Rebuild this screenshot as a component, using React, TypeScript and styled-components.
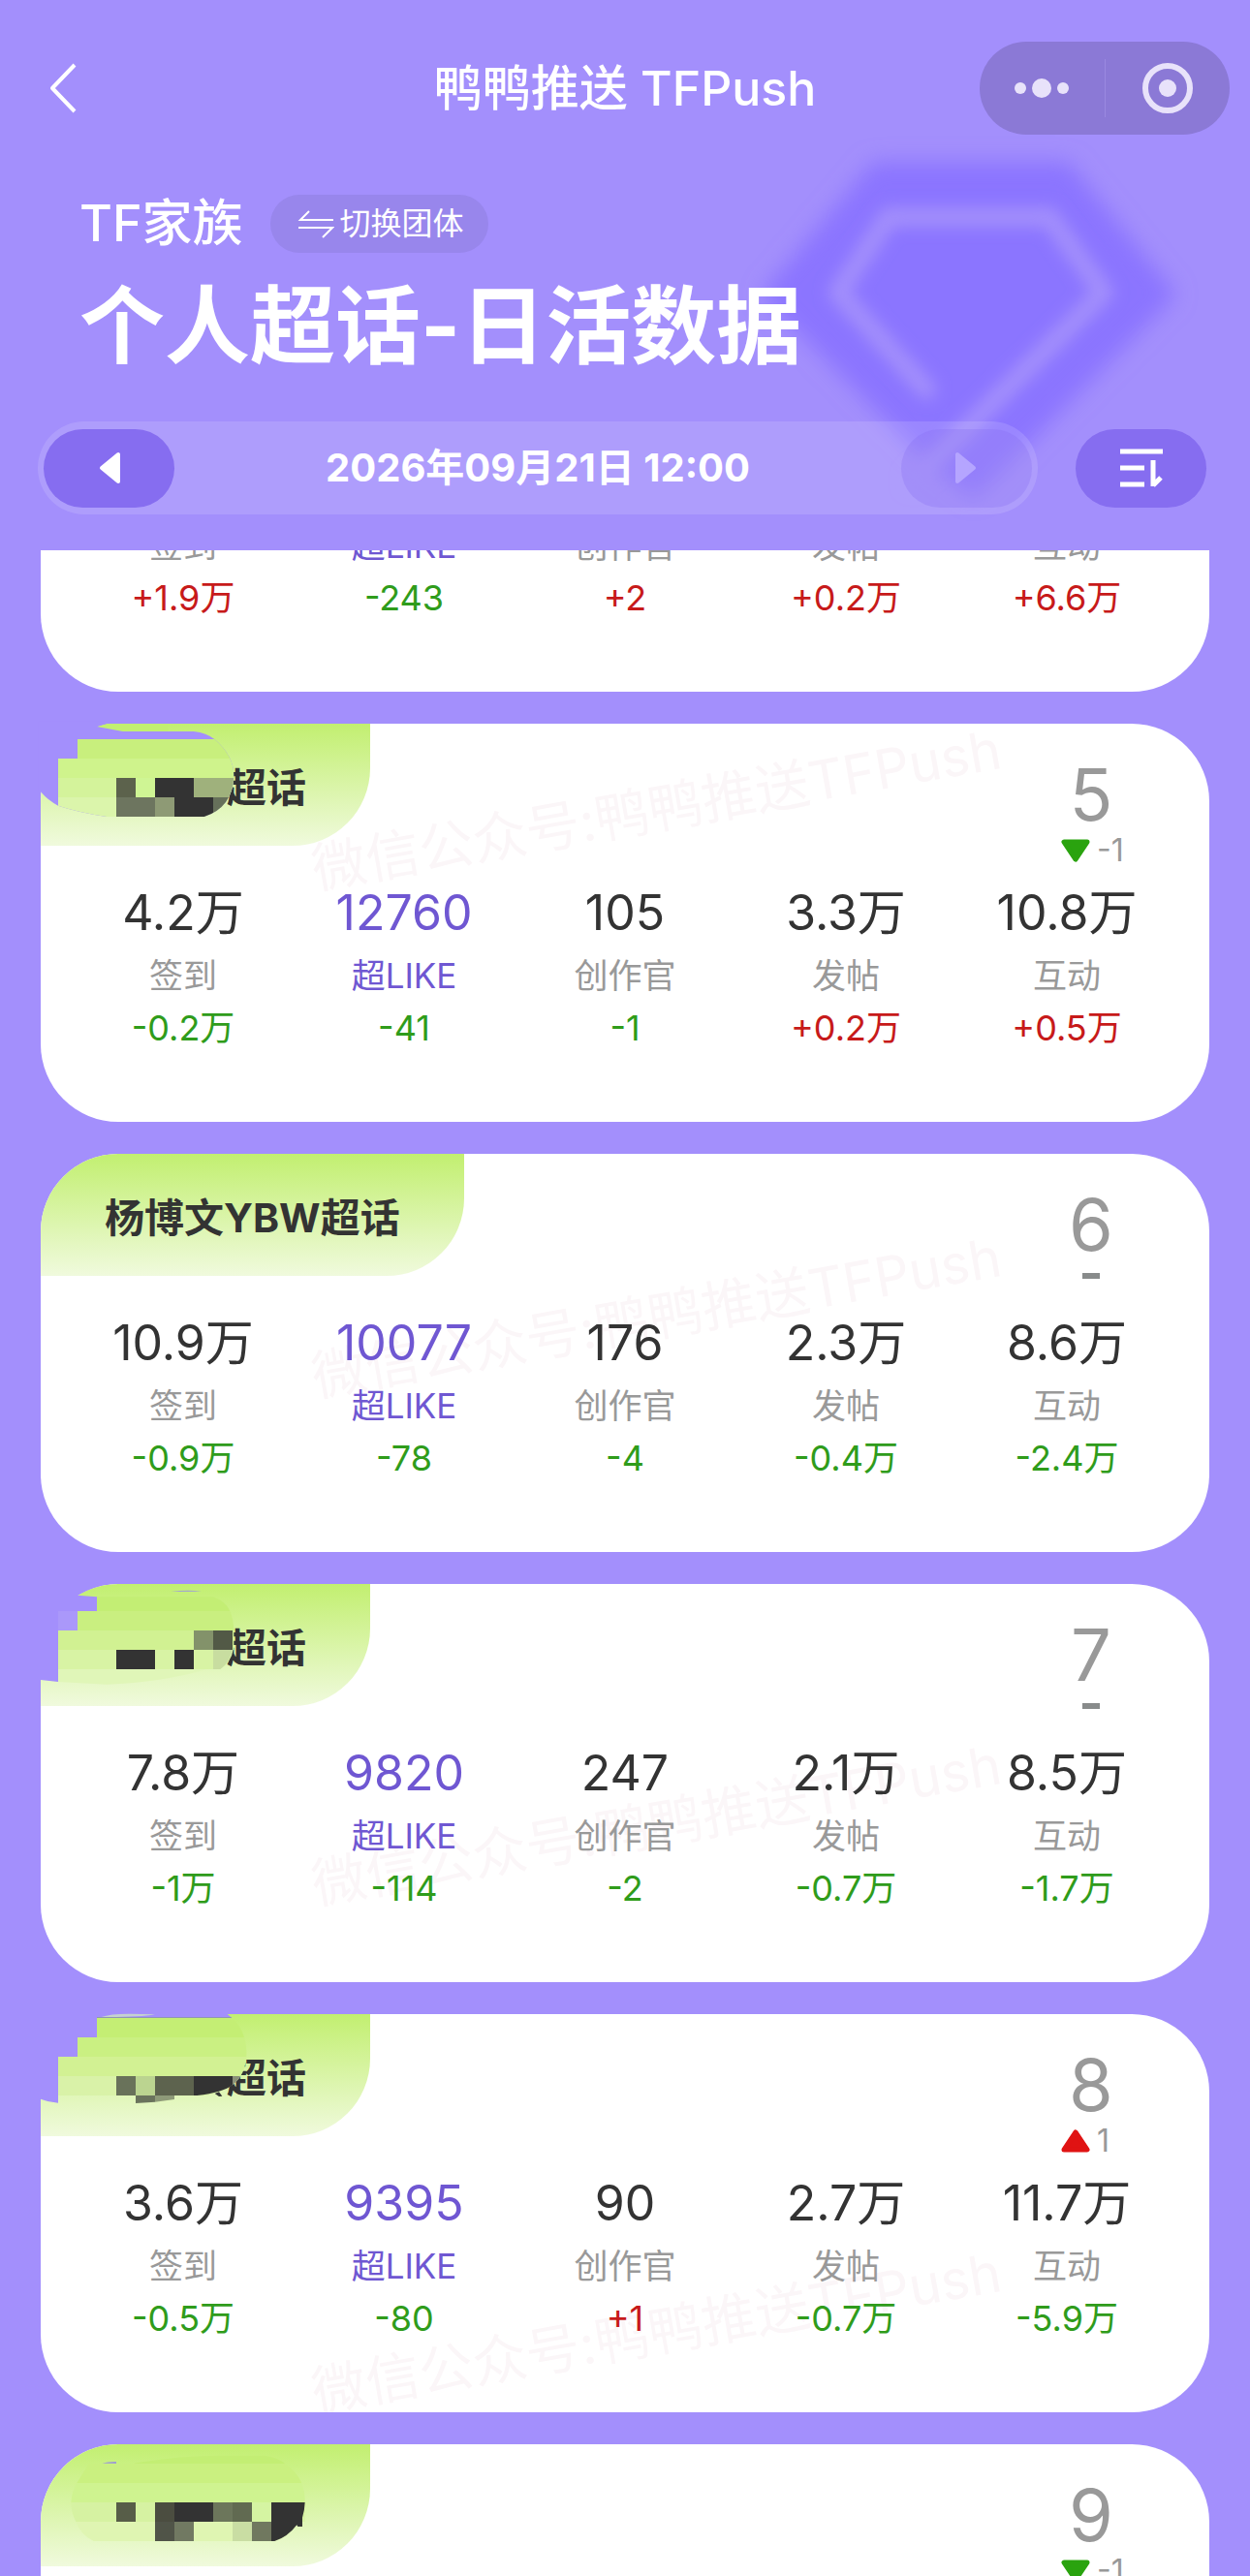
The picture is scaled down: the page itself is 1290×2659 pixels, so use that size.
import React, { Fragment, ReactNode } from "react";
import styled, { createGlobalStyle } from "styled-components";

const GlobalStyle = createGlobalStyle`
  *, *::before, *::after { box-sizing: border-box; }
  body {
    margin: 0;
    background: #a38ffc;
    font-family: Inter, "Noto Sans CJK SC", sans-serif;
    color: #333;
  }
  button { font: inherit; color: inherit; border: 0; padding: 0; background: none; cursor: pointer; }
  h1, h2, p, ul, dl, dd, dt { margin: 0; padding: 0; font-weight: inherit; }
  svg { display: block; flex: none; }
`;

const Page = styled.div`
  position: relative;
  display: flex;
  flex-direction: column;
  height: 100vh;
  overflow: hidden;
  background: #a38ffc;
`;

const GemArt = styled.svg`
  position: absolute;
  top: 122px;
  right: 47px;
`;

const NavBar = styled.header`
  position: relative;
  display: grid;
  grid-template-columns: 258px 1fr 258px;
  align-items: center;
  padding: 43px 21px 0;
  color: #fff;
`;

const BackButton = styled.button`
  display: flex;
  align-items: center;
  height: 96px;
  padding-left: 28px;
`;

const NavTitle = styled.h1`
  font-size: 50px;
  line-height: 72px;
  font-weight: 500;
  text-align: center;
  white-space: nowrap;
`;

const Capsule = styled.div`
  display: flex;
  align-items: center;
  height: 96px;
  border-radius: 48px;
  background: #8b79d6;
  color: #e8e2fa;
`;

const CapsuleButton = styled.button`
  flex: 1;
  display: flex;
  align-items: center;
  justify-content: center;
  height: 96px;
`;

const CapsuleDivider = styled.span`
  width: 1px;
  height: 60px;
  background: #9a89e0;
`;

const Hero = styled.section`
  position: relative;
  padding: 62px 82px 0;
  color: #fff;
`;

const GroupRow = styled.div`
  display: flex;
  align-items: center;
  gap: 28px;
`;

const GroupName = styled.p`
  font-size: 52px;
  line-height: 60px;
  font-weight: 500;
`;

const SwitchButton = styled.button`
  display: flex;
  align-items: center;
  gap: 6px;
  height: 60px;
  padding: 0 25px 0 28px;
  border-radius: 30px;
  background: #9886ec;
  font-size: 32px;
  line-height: 48px;
`;

const PageTitle = styled.h2`
  margin-top: 23px;
  font-size: 88px;
  line-height: 104px;
  font-weight: 700;
  white-space: nowrap;
`;

const Toolbar = styled.div`
  position: relative;
  display: flex;
  align-items: center;
  gap: 39px;
  margin: 47px 45px 37px 39px;
  color: #fff;
`;

const DateBar = styled.div`
  flex: 1;
  display: flex;
  align-items: center;
  justify-content: space-between;
  height: 96px;
  padding: 0 6px;
  border-radius: 48px;
  background: rgba(255, 255, 255, 0.13);
`;

const DateText = styled.time`
  font-size: 40px;
  line-height: 54px;
  font-weight: 700;
  white-space: nowrap;
`;

const PillButton = styled.button<{ $muted?: boolean }>`
  display: flex;
  align-items: center;
  justify-content: center;
  width: 135px;
  height: 81px;
  border-radius: 41px;
  background: ${(p) => (p.$muted ? "rgba(133, 109, 240, 0.28)" : "#866df0")};
  color: ${(p) => (p.$muted ? "#b5a5ff" : "#fff")};
`;

const List = styled.main`
  position: relative;
  flex: 1;
  min-height: 0;
  overflow: hidden;
  display: flex;
  flex-direction: column;
  gap: 33px;
  padding: 0 42px;
`;

const Card = styled.article<{ $clipped?: boolean }>`
  position: relative;
  flex: none;
  overflow: ${(p) => (p.$clipped ? "hidden" : "visible")};
  padding-bottom: 70px;
  border-radius: ${(p) => (p.$clipped ? "0 0 80px 80px" : "80px")};
  background: #fff;
`;

const CardHead = styled.div`
  position: relative;
  display: flex;
  justify-content: space-between;
  align-items: flex-start;
  height: 157px;
  padding-right: 90px;
`;

const NameTab = styled.div`
  position: relative;
  display: flex;
  align-items: center;
  justify-content: flex-end;
  min-width: 340px;
  height: 126px;
  padding: 6px 66px 0;
  border-radius: 80px 0 80px 0;
  background: linear-gradient(#c2ef70, #f0fadd);
  font-size: 41px;
  line-height: 60px;
  font-weight: 700;
`;

const Mosaic = styled.svg`
  position: absolute;
  top: 0;
  left: 0;
  overflow: visible;
`;

const RankBox = styled.div`
  display: flex;
  flex-direction: column;
  width: 64px;
  padding-top: 34px;
  color: #999;
`;

const RankNumber = styled.p`
  font-size: 74px;
  line-height: 78px;
  text-align: center;
`;

const Trend = styled.p<{ $flat?: boolean }>`
  display: flex;
  align-items: center;
  justify-content: ${(p) => (p.$flat ? "center" : "flex-start")};
  gap: 6px;
  font-size: 32px;
  line-height: 38px;
  white-space: nowrap;
  height: 38px;
`;

const FlatMark = styled.span`
  width: 18px;
  height: 6px;
  margin-top: -10px;
  background: #888b8b;
`;

const Stats = styled.dl`
  position: relative;
  display: grid;
  grid-template-columns: repeat(5, 1fr);
  padding: 0 33px;
  text-align: center;
`;

const Stat = styled.div<{ $clipped?: boolean }>`
  display: flex;
  flex-direction: column;
  margin-top: ${(p) => (p.$clipped ? "-32px" : "0")};
`;

const Value = styled.dd<{ $accent?: boolean }>`
  order: -1;
  font-size: 50px;
  line-height: 76px;
  color: ${(p) => (p.$accent ? "#6f57d2" : "#333")};
`;

const Label = styled.dt<{ $accent?: boolean }>`
  font-size: 35px;
  line-height: 54px;
  color: ${(p) => (p.$accent ? "#6f57d2" : "#999")};
`;

const Delta = styled.dd<{ $up: boolean }>`
  font-size: 36px;
  line-height: 54px;
  color: ${(p) => (p.$up ? "#c71a1a" : "#2f9c1b")};
`;

const WatermarkLayer = styled.div`
  position: absolute;
  inset: 0;
  overflow: hidden;
  border-radius: 80px;
  pointer-events: none;
`;

const Watermark = styled.div<{ $center: number }>`
  position: absolute;
  top: ${(p) => p.$center - 40}px;
  left: 0;
  right: 0;
  padding-left: 66px;
  font-size: 56px;
  line-height: 80px;
  text-align: center;
  white-space: nowrap;
  color: #fbf6f8;
  transform: rotate(-10deg);
`;

const LABELS = ["签到", "超LIKE", "创作官", "发帖", "互动"];
const PURPLE = "#a38ffc";

type Block = [number, number, number, number, string];

function Blocks({ items }: { items: Block[] }) {
  return (
    <>
      {items.map(([x, y, w, h, fill], i) => (
        <rect key={i} x={x} y={y} width={w} height={h} fill={fill} />
      ))}
    </>
  );
}

interface Topic {
  rank: number;
  name: string;
  change: number;
  values: string[];
  deltas: string[];
  watermark?: number;
  cover?: ReactNode;
}

const coverFive = (
  <Mosaic width="340" height="126" viewBox="126 51 1020 378">
    <defs>
      <clipPath id="brush5">
        <path d="M118 43H330V51L300 60L380 75H600Q640 80 664 99Q725 150 724 215Q720 310 632 339H330Q240 325 180 305Q150 290 126 262H118Z" />
      </clipPath>
    </defs>
    <path d="M330 51L300 60L380 75H520V51Z" fill="#c2ef70" />
    <g clipPath="url(#brush5)">
      <rect x="116" y="41" width="640" height="310" fill={PURPLE} />
      <Blocks
        items={[
          [240, 99, 500, 60, "#c8ef7d"],
          [180, 159, 560, 60, "#cff38c"],
          [180, 219, 560, 60, "#d4f39b"],
          [180, 279, 560, 60, "#dbf5ab"],
          [360, 219, 60, 60, "#5c624c"],
          [420, 219, 60, 60, "#cff594"],
          [480, 219, 120, 60, "#333"],
          [600, 219, 130, 60, "#9fb17c"],
          [360, 279, 120, 60, "#6d755f"],
          [480, 279, 60, 60, "#8e9a75"],
          [540, 279, 120, 60, "#333"],
          [660, 279, 70, 60, "#66705a"],
        ]}
      />
    </g>
  </Mosaic>
);

const coverSeven = (
  <Mosaic width="340" height="126" viewBox="126 45 1020 378">
    <path d="M118 38H340V45Q290 52 240 80L300 85V129H240V189H180V348L126 342H118Z" fill={PURPLE} />
    <rect x="180" y="129" width="60" height="60" fill="#aa98fa" />
    <path d="M530 69Q580 62 624 68Z" fill="#9f9fd8" />
    <path d="M300 85H660Q700 100 712 129H300Z" fill="#c3ee74" />
    <path d="M240 129H712Q722 150 724 189H240Z" fill="#c9ef80" />
    <path d="M180 189H724V249H180Z" fill="#d1f192" />
    <path d="M180 249H722Q715 290 680 309H180Z" fill="#d8f3a4" />
    <path d="M180 309H640Q500 350 330 356L180 348Z" fill="#e0f6b8" />
    <Blocks
      items={[
        [360, 249, 120, 60, "#333"],
        [540, 249, 60, 60, "#333"],
        [600, 189, 60, 60, "#83926a"],
        [660, 189, 60, 60, "#525946"],
      ]}
    />
    <path d="M660 249H720Q710 290 682 309H660Z" fill="#c8dda0" />
  </Mosaic>
);

const coverEight = (
  <Mosaic width="340" height="126" viewBox="126 57 1020 378">
    <path d="M118 50H704V57L718 69H300V129H240V189H180V332Q150 330 126 320H118Z" fill={PURPLE} />
    <path d="M314 66Q340 56 400 56L480 58Q430 67 314 66Z" fill="#c5d2cf" />
    <path d="M300 66H716V70H300Z" fill="#8f96b4" />
    <path d="M300 69H716Q745 90 756 129H300Z" fill="#c4ee74" />
    <path d="M240 129H756Q765 160 763 189H240Z" fill="#caf082" />
    <path d="M180 189H763Q760 225 745 249H180Z" fill="#d2f193" />
    <path d="M180 249H745Q720 290 640 309H180Z" fill="#d9f2a8" />
    <Blocks
      items={[
        [360, 249, 60, 60, "#69725a"],
        [420, 249, 60, 60, "#bbd490"],
        [480, 249, 120, 60, "#5d634e"],
      ]}
    />
    <path d="M600 249H720V276Q690 300 610 309H600Z" fill="#333" />
    <path d="M720 249H744Q735 265 720 277Z" fill="#8a9178" />
    <path d="M665 303L678 298L688 311L678 312Z" fill="#333" />
    <path d="M420 309H480V329L420 333Z" fill="#6a735c" />
    <path d="M480 309H540V321L480 329Z" fill="#8e9a78" />
  </Mosaic>
);

const coverNine = (
  <Mosaic width="340" height="126" viewBox="126 69 1020 378">
    <path d="M415 128Q560 104 680 104H820Q860 110 882 129H415Z" fill="#c3ee74" />
    <path d="M316 128Q335 122 360 123V129Z" fill="#9f9fcf" />
    <path d="M275 129H882Q920 155 934 189H238Z" fill="#caf080" />
    <path d="M238 189H934Q946 220 944 249H220Q222 215 238 189Z" fill="#cff390" />
    <path d="M220 249H944V309H235Q220 280 220 249Z" fill="#d6f2a2" />
    <path d="M235 309H925Q890 360 850 369H290Q250 350 235 309Z" fill="#dff5b2" />
    <Blocks
      items={[
        [360, 249, 60, 60, "#575d48"],
        [480, 249, 60, 60, "#4b4d40"],
        [540, 249, 120, 60, "#333"],
        [660, 249, 60, 60, "#6c765b"],
        [720, 249, 60, 60, "#616a51"],
        [780, 249, 60, 60, "#d5f4a2"],
        [480, 309, 60, 60, "#505448"],
        [540, 309, 60, 60, "#717962"],
        [720, 309, 60, 60, "#c9dda3"],
        [780, 309, 60, 60, "#70785f"],
      ]}
    />
    <path d="M840 249H944Q943 275 936 296V324H922L919 319Q890 357 850 369H840Z" fill="#333" />
  </Mosaic>
);

const TOPICS: Topic[] = [
  {
    rank: 5,
    name: "超话",
    change: -1,
    values: ["4.2万", "12760", "105", "3.3万", "10.8万"],
    deltas: ["-0.2万", "-41", "-1", "+0.2万", "+0.5万"],
    watermark: 94,
    cover: coverFive,
  },
  {
    rank: 6,
    name: "杨博文YBW超话",
    change: 0,
    values: ["10.9万", "10077", "176", "2.3万", "8.6万"],
    deltas: ["-0.9万", "-78", "-4", "-0.4万", "-2.4万"],
    watermark: 174,
  },
  {
    rank: 7,
    name: "超话",
    change: 0,
    values: ["7.8万", "9820", "247", "2.1万", "8.5万"],
    deltas: ["-1万", "-114", "-2", "-0.7万", "-1.7万"],
    watermark: 254,
    cover: coverSeven,
  },
  {
    rank: 8,
    name: "超话",
    change: 1,
    values: ["3.6万", "9395", "90", "2.7万", "11.7万"],
    deltas: ["-0.5万", "-80", "+1", "-0.7万", "-5.9万"],
    watermark: 334,
    cover: coverEight,
  },
  {
    rank: 9,
    name: "",
    change: -1,
    values: [],
    deltas: [],
    cover: coverNine,
  },
];

function TrendMark({ change }: { change: number }) {
  if (change === 0) {
    return (
      <Trend $flat>
        <FlatMark role="img" aria-label="持平" />
      </Trend>
    );
  }
  const up = change > 0;
  return (
    <Trend>
      <svg width="32" height="26" viewBox="0 0 32 26" aria-hidden="true">
        <path
          d={up ? "M16 4L28 22H4Z" : "M4 4H28L16 22Z"}
          fill={up ? "#e01313" : "#2aa30f"}
          stroke={up ? "#e01313" : "#2aa30f"}
          strokeWidth="5"
          strokeLinejoin="round"
        />
      </svg>
      {change}
    </Trend>
  );
}

function TopicCard({ topic }: { topic: Topic }) {
  return (
    <Card>
      {topic.watermark !== undefined && (
        <WatermarkLayer aria-hidden="true">
          <Watermark $center={topic.watermark}>微信公众号:鸭鸭推送TFPush</Watermark>
        </WatermarkLayer>
      )}
      <CardHead>
        <NameTab>
          {topic.name}
          {topic.cover}
        </NameTab>
        <RankBox>
          <RankNumber>{topic.rank}</RankNumber>
          <TrendMark change={topic.change} />
        </RankBox>
      </CardHead>
      {topic.values.length > 0 && (
        <Stats>
          {LABELS.map((label, i) => (
            <Stat key={label}>
              <Label $accent={i === 1}>{label}</Label>
              <Value $accent={i === 1}>{topic.values[i]}</Value>
              <Delta $up={topic.deltas[i].startsWith("+")}>{topic.deltas[i]}</Delta>
            </Stat>
          ))}
        </Stats>
      )}
    </Card>
  );
}

function ScrolledCard({ deltas }: { deltas: string[] }) {
  return (
    <Card $clipped>
      <Stats>
        {LABELS.map((label, i) => (
          <Stat key={label} $clipped>
            <Label $accent={i === 1}>{label}</Label>
            <Delta $up={deltas[i].startsWith("+")}>{deltas[i]}</Delta>
          </Stat>
        ))}
      </Stats>
    </Card>
  );
}

export default function App() {
  return (
    <Fragment>
      <GlobalStyle />
      <Page>
        <GemArt width="480" height="420" viewBox="760 120 480 420" aria-hidden="true">
          <defs>
            <filter id="soft" x="-20%" y="-20%" width="140%" height="140%">
              <feGaussianBlur stdDeviation="11" />
            </filter>
            <filter id="softLine" x="-20%" y="-20%" width="140%" height="140%">
              <feGaussianBlur stdDeviation="8" />
            </filter>
          </defs>
          <path
            d="M900 169H1098L1206 302L1002 508L958 474L788 302Z"
            fill="#8b75ff"
            stroke="#8b75ff"
            strokeWidth="8"
            strokeLinejoin="round"
            filter="url(#soft)"
          />
          <path
            d="M953 400L862 300L914 222H1080L1136 300L940 494"
            fill="none"
            stroke="#a38ffc"
            strokeWidth="20"
            strokeLinecap="round"
            strokeLinejoin="round"
            filter="url(#softLine)"
          />
        </GemArt>

        <NavBar>
          <BackButton aria-label="返回">
            <svg width="32" height="54" viewBox="0 0 32 54" fill="none">
              <path d="M28 3L5 27L28 51" stroke="#fff" strokeWidth="4" strokeLinejoin="round" />
            </svg>
          </BackButton>
          <NavTitle>鸭鸭推送 TFPush</NavTitle>
          <Capsule>
            <CapsuleButton aria-label="更多">
              <svg width="58" height="24" viewBox="0 0 58 24" fill="currentColor">
                <circle cx="7" cy="12" r="6" />
                <circle cx="29" cy="12" r="10" />
                <circle cx="51" cy="12" r="6" />
              </svg>
            </CapsuleButton>
            <CapsuleDivider />
            <CapsuleButton aria-label="关闭">
              <svg width="54" height="54" viewBox="0 0 54 54">
                <circle cx="27" cy="27" r="23" fill="none" stroke="currentColor" strokeWidth="6" />
                <circle cx="27" cy="27" r="9" fill="currentColor" />
              </svg>
            </CapsuleButton>
          </Capsule>
        </NavBar>

        <Hero>
          <GroupRow>
            <GroupName>TF家族</GroupName>
            <SwitchButton>
              <svg width="38" height="30" viewBox="0 0 38 30" fill="none" stroke="#fff" strokeWidth="2">
                <path d="M12 2L3 11H37" />
                <path d="M1 19H36L26 29" />
              </svg>
              切换团体
            </SwitchButton>
          </GroupRow>
          <PageTitle>个人超话-日活数据</PageTitle>
        </Hero>

        <Toolbar>
          <DateBar>
            <PillButton aria-label="上一时段">
              <svg width="24" height="34" viewBox="0 0 24 34" fill="currentColor">
                <path
                  d="M21 3V31L4 17Z"
                  stroke="currentColor"
                  strokeWidth="4"
                  strokeLinejoin="round"
                />
              </svg>
            </PillButton>
            <DateText dateTime="2026-09-21T12:00">2026年09月21日 12:00</DateText>
            <PillButton $muted aria-label="下一时段">
              <svg width="24" height="34" viewBox="0 0 24 34" fill="currentColor">
                <path
                  d="M3 3V31L20 17Z"
                  stroke="currentColor"
                  strokeWidth="4"
                  strokeLinejoin="round"
                />
              </svg>
            </PillButton>
          </DateBar>
          <PillButton aria-label="排序">
            <svg width="46" height="44" viewBox="0 0 46 44" fill="none" stroke="#fff" strokeWidth="5">
              <path d="M1 5H45M1 22H26M1 39H26" />
              <path d="M35 14V41M35 40L43 32" />
            </svg>
          </PillButton>
        </Toolbar>

        <List>
          <ScrolledCard deltas={["+1.9万", "-243", "+2", "+0.2万", "+6.6万"]} />
          {TOPICS.map((topic) => (
            <TopicCard key={topic.rank} topic={topic} />
          ))}
        </List>
      </Page>
    </Fragment>
  );
}
